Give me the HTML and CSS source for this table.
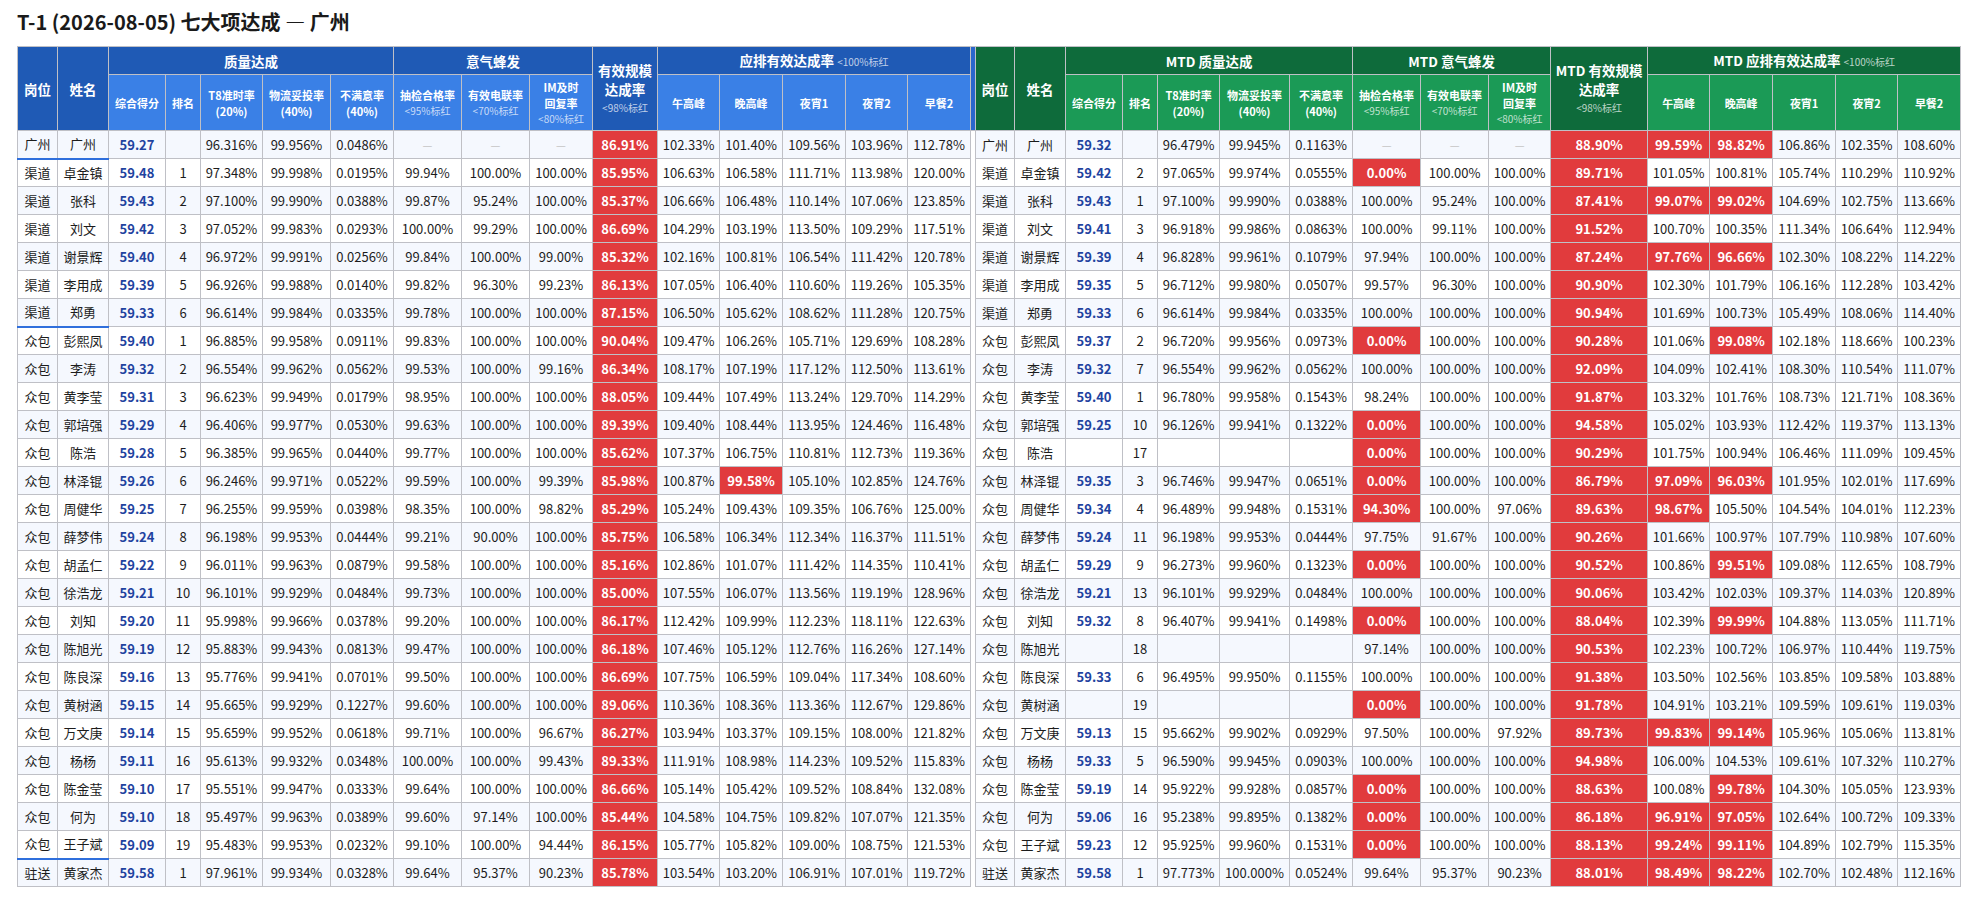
FILE: index.html
```html
<!DOCTYPE html>
<html lang="zh-CN">
<head>
<meta charset="utf-8">
<title>T-1 七大项达成 — 广州</title>
<link rel="stylesheet" href="styles.css">
</head>
<body>
<h1 class="title">T-1 (2026-08-05) 七大项达成 — 广州</h1>
<table class="grid">
<colgroup>
<col class="w40"><col class="w51"><col class="w57"><col class="w35"><col class="w62"><col class="w68"><col class="w63"><col class="w68"><col class="w68"><col class="w63"><col class="w65"><col class="w62"><col class="w63"><col class="w63"><col class="w62"><col class="w63">
<col class="w5">
<col class="w39"><col class="w51"><col class="w57"><col class="w35"><col class="w62"><col class="w70"><col class="w63"><col class="w68"><col class="w68"><col class="w62"><col class="w97"><col class="w62"><col class="w63"><col class="w63"><col class="w62"><col class="w63">
</colgroup>
<thead>
<tr class="h1">
<th rowspan="2" class="b1">岗位</th>
<th rowspan="2" class="b1">姓名</th>
<th colspan="5" class="b1">质量达成</th>
<th colspan="3" class="b1">意气蜂发</th>
<th rowspan="2" class="b1 tall">有效规模<br>达成率<span class="note">&lt;98%标红</span></th>
<th colspan="5" class="b1">应排有效达成率 <span class="inote">&lt;100%标红</span></th>
<th rowspan="2" class="sepH"></th>
<th rowspan="2" class="g1">岗位</th>
<th rowspan="2" class="g1">姓名</th>
<th colspan="5" class="g1">MTD 质量达成</th>
<th colspan="3" class="g1">MTD 意气蜂发</th>
<th rowspan="2" class="g1 tall">MTD 有效规模<br>达成率<span class="note">&lt;98%标红</span></th>
<th colspan="5" class="g1">MTD 应排有效达成率 <span class="inote">&lt;100%标红</span></th>
</tr>
<tr class="h2">
<th class="b2">综合得分</th><th class="b2">排名</th><th class="b2">T8准时率<br>(20%)</th><th class="b2">物流妥投率<br>(40%)</th><th class="b2">不满意率<br>(40%)</th>
<th class="b2">抽检合格率<span class="note">&lt;95%标红</span></th><th class="b2">有效电联率<span class="note">&lt;70%标红</span></th><th class="b2">IM及时<br>回复率<span class="note">&lt;80%标红</span></th>
<th class="b2">午高峰</th><th class="b2">晚高峰</th><th class="b2">夜宵1</th><th class="b2">夜宵2</th><th class="b2">早餐2</th>
<th class="g2">综合得分</th><th class="g2">排名</th><th class="g2">T8准时率<br>(20%)</th><th class="g2">物流妥投率<br>(40%)</th><th class="g2">不满意率<br>(40%)</th>
<th class="g2">抽检合格率<span class="note">&lt;95%标红</span></th><th class="g2">有效电联率<span class="note">&lt;70%标红</span></th><th class="g2">IM及时<br>回复率<span class="note">&lt;80%标红</span></th>
<th class="g2">午高峰</th><th class="g2">晚高峰</th><th class="g2">夜宵1</th><th class="g2">夜宵2</th><th class="g2">早餐2</th>
</tr>
</thead>
<tbody>
<tr class="ge"><td>广州</td><td>广州</td><td class="s">59.27</td><td></td><td>96.316%</td><td>99.956%</td><td>0.0486%</td><td class="d">—</td><td class="d">—</td><td class="d">—</td><td class="r">86.91%</td><td>102.33%</td><td>101.40%</td><td>109.56%</td><td>103.96%</td><td>112.78%</td><td class="sep"></td><td>广州</td><td>广州</td><td class="s">59.32</td><td></td><td>96.479%</td><td>99.945%</td><td>0.1163%</td><td class="d">—</td><td class="d">—</td><td class="d">—</td><td class="r">88.90%</td><td class="r">99.59%</td><td class="r">98.82%</td><td>106.86%</td><td>102.35%</td><td>108.60%</td></tr>
<tr><td>渠道</td><td>卓金镇</td><td class="s">59.48</td><td>1</td><td>97.348%</td><td>99.998%</td><td>0.0195%</td><td>99.94%</td><td>100.00%</td><td>100.00%</td><td class="r">85.95%</td><td>106.63%</td><td>106.58%</td><td>111.71%</td><td>113.98%</td><td>120.00%</td><td class="sep"></td><td>渠道</td><td>卓金镇</td><td class="s">59.42</td><td>2</td><td>97.065%</td><td>99.974%</td><td>0.0555%</td><td class="r">0.00%</td><td>100.00%</td><td>100.00%</td><td class="r">89.71%</td><td>101.05%</td><td>100.81%</td><td>105.74%</td><td>110.29%</td><td>110.92%</td></tr>
<tr><td>渠道</td><td>张科</td><td class="s">59.43</td><td>2</td><td>97.100%</td><td>99.990%</td><td>0.0388%</td><td>99.87%</td><td>95.24%</td><td>100.00%</td><td class="r">85.37%</td><td>106.66%</td><td>106.48%</td><td>110.14%</td><td>107.06%</td><td>123.85%</td><td class="sep"></td><td>渠道</td><td>张科</td><td class="s">59.43</td><td>1</td><td>97.100%</td><td>99.990%</td><td>0.0388%</td><td>100.00%</td><td>95.24%</td><td>100.00%</td><td class="r">87.41%</td><td class="r">99.07%</td><td class="r">99.02%</td><td>104.69%</td><td>102.75%</td><td>113.66%</td></tr>
<tr><td>渠道</td><td>刘文</td><td class="s">59.42</td><td>3</td><td>97.052%</td><td>99.983%</td><td>0.0293%</td><td>100.00%</td><td>99.29%</td><td>100.00%</td><td class="r">86.69%</td><td>104.29%</td><td>103.19%</td><td>113.50%</td><td>109.29%</td><td>117.51%</td><td class="sep"></td><td>渠道</td><td>刘文</td><td class="s">59.41</td><td>3</td><td>96.918%</td><td>99.986%</td><td>0.0863%</td><td>100.00%</td><td>99.11%</td><td>100.00%</td><td class="r">91.52%</td><td>100.70%</td><td>100.35%</td><td>111.34%</td><td>106.64%</td><td>112.94%</td></tr>
<tr><td>渠道</td><td>谢景辉</td><td class="s">59.40</td><td>4</td><td>96.972%</td><td>99.991%</td><td>0.0256%</td><td>99.84%</td><td>100.00%</td><td>99.00%</td><td class="r">85.32%</td><td>102.16%</td><td>100.81%</td><td>106.54%</td><td>111.42%</td><td>120.78%</td><td class="sep"></td><td>渠道</td><td>谢景辉</td><td class="s">59.39</td><td>4</td><td>96.828%</td><td>99.961%</td><td>0.1079%</td><td>97.94%</td><td>100.00%</td><td>100.00%</td><td class="r">87.24%</td><td class="r">97.76%</td><td class="r">96.66%</td><td>102.30%</td><td>108.22%</td><td>114.22%</td></tr>
<tr><td>渠道</td><td>李用成</td><td class="s">59.39</td><td>5</td><td>96.926%</td><td>99.988%</td><td>0.0140%</td><td>99.82%</td><td>96.30%</td><td>99.23%</td><td class="r">86.13%</td><td>107.05%</td><td>106.40%</td><td>110.60%</td><td>119.26%</td><td>105.35%</td><td class="sep"></td><td>渠道</td><td>李用成</td><td class="s">59.35</td><td>5</td><td>96.712%</td><td>99.980%</td><td>0.0507%</td><td>99.57%</td><td>96.30%</td><td>100.00%</td><td class="r">90.90%</td><td>102.30%</td><td>101.79%</td><td>106.16%</td><td>112.28%</td><td>103.42%</td></tr>
<tr class="ge"><td>渠道</td><td>郑勇</td><td class="s">59.33</td><td>6</td><td>96.614%</td><td>99.984%</td><td>0.0335%</td><td>99.78%</td><td>100.00%</td><td>100.00%</td><td class="r">87.15%</td><td>106.50%</td><td>105.62%</td><td>108.62%</td><td>111.28%</td><td>120.75%</td><td class="sep"></td><td>渠道</td><td>郑勇</td><td class="s">59.33</td><td>6</td><td>96.614%</td><td>99.984%</td><td>0.0335%</td><td>100.00%</td><td>100.00%</td><td>100.00%</td><td class="r">90.94%</td><td>101.69%</td><td>100.73%</td><td>105.49%</td><td>108.06%</td><td>114.40%</td></tr>
<tr><td>众包</td><td>彭熙凤</td><td class="s">59.40</td><td>1</td><td>96.885%</td><td>99.958%</td><td>0.0911%</td><td>99.83%</td><td>100.00%</td><td>100.00%</td><td class="r">90.04%</td><td>109.47%</td><td>106.26%</td><td>105.71%</td><td>129.69%</td><td>108.28%</td><td class="sep"></td><td>众包</td><td>彭熙凤</td><td class="s">59.37</td><td>2</td><td>96.720%</td><td>99.956%</td><td>0.0973%</td><td class="r">0.00%</td><td>100.00%</td><td>100.00%</td><td class="r">90.28%</td><td>101.06%</td><td class="r">99.08%</td><td>102.18%</td><td>118.66%</td><td>100.23%</td></tr>
<tr><td>众包</td><td>李涛</td><td class="s">59.32</td><td>2</td><td>96.554%</td><td>99.962%</td><td>0.0562%</td><td>99.53%</td><td>100.00%</td><td>99.16%</td><td class="r">86.34%</td><td>108.17%</td><td>107.19%</td><td>117.12%</td><td>112.50%</td><td>113.61%</td><td class="sep"></td><td>众包</td><td>李涛</td><td class="s">59.32</td><td>7</td><td>96.554%</td><td>99.962%</td><td>0.0562%</td><td>100.00%</td><td>100.00%</td><td>100.00%</td><td class="r">92.09%</td><td>104.09%</td><td>102.41%</td><td>108.30%</td><td>110.54%</td><td>111.07%</td></tr>
<tr><td>众包</td><td>黄李莹</td><td class="s">59.31</td><td>3</td><td>96.623%</td><td>99.949%</td><td>0.0179%</td><td>98.95%</td><td>100.00%</td><td>100.00%</td><td class="r">88.05%</td><td>109.44%</td><td>107.49%</td><td>113.24%</td><td>129.70%</td><td>114.29%</td><td class="sep"></td><td>众包</td><td>黄李莹</td><td class="s">59.40</td><td>1</td><td>96.780%</td><td>99.958%</td><td>0.1543%</td><td>98.24%</td><td>100.00%</td><td>100.00%</td><td class="r">91.87%</td><td>103.32%</td><td>101.76%</td><td>108.73%</td><td>121.71%</td><td>108.36%</td></tr>
<tr><td>众包</td><td>郭培强</td><td class="s">59.29</td><td>4</td><td>96.406%</td><td>99.977%</td><td>0.0530%</td><td>99.63%</td><td>100.00%</td><td>100.00%</td><td class="r">89.39%</td><td>109.40%</td><td>108.44%</td><td>113.95%</td><td>124.46%</td><td>116.48%</td><td class="sep"></td><td>众包</td><td>郭培强</td><td class="s">59.25</td><td>10</td><td>96.126%</td><td>99.941%</td><td>0.1322%</td><td class="r">0.00%</td><td>100.00%</td><td>100.00%</td><td class="r">94.58%</td><td>105.02%</td><td>103.93%</td><td>112.42%</td><td>119.37%</td><td>113.13%</td></tr>
<tr><td>众包</td><td>陈浩</td><td class="s">59.28</td><td>5</td><td>96.385%</td><td>99.965%</td><td>0.0440%</td><td>99.77%</td><td>100.00%</td><td>100.00%</td><td class="r">85.62%</td><td>107.37%</td><td>106.75%</td><td>110.81%</td><td>112.73%</td><td>119.36%</td><td class="sep"></td><td>众包</td><td>陈浩</td><td class="s"></td><td>17</td><td></td><td></td><td></td><td class="r">0.00%</td><td>100.00%</td><td>100.00%</td><td class="r">90.29%</td><td>101.75%</td><td>100.94%</td><td>106.46%</td><td>111.09%</td><td>109.45%</td></tr>
<tr><td>众包</td><td>林泽锟</td><td class="s">59.26</td><td>6</td><td>96.246%</td><td>99.971%</td><td>0.0522%</td><td>99.59%</td><td>100.00%</td><td>99.39%</td><td class="r">85.98%</td><td>100.87%</td><td class="r">99.58%</td><td>105.10%</td><td>102.85%</td><td>124.76%</td><td class="sep"></td><td>众包</td><td>林泽锟</td><td class="s">59.35</td><td>3</td><td>96.746%</td><td>99.947%</td><td>0.0651%</td><td class="r">0.00%</td><td>100.00%</td><td>100.00%</td><td class="r">86.79%</td><td class="r">97.09%</td><td class="r">96.03%</td><td>101.95%</td><td>102.01%</td><td>117.69%</td></tr>
<tr><td>众包</td><td>周健华</td><td class="s">59.25</td><td>7</td><td>96.255%</td><td>99.959%</td><td>0.0398%</td><td>98.35%</td><td>100.00%</td><td>98.82%</td><td class="r">85.29%</td><td>105.24%</td><td>109.43%</td><td>109.35%</td><td>106.76%</td><td>125.00%</td><td class="sep"></td><td>众包</td><td>周健华</td><td class="s">59.34</td><td>4</td><td>96.489%</td><td>99.948%</td><td>0.1531%</td><td class="r">94.30%</td><td>100.00%</td><td>97.06%</td><td class="r">89.63%</td><td class="r">98.67%</td><td>105.50%</td><td>104.54%</td><td>104.01%</td><td>112.23%</td></tr>
<tr><td>众包</td><td>薛梦伟</td><td class="s">59.24</td><td>8</td><td>96.198%</td><td>99.953%</td><td>0.0444%</td><td>99.21%</td><td>90.00%</td><td>100.00%</td><td class="r">85.75%</td><td>106.58%</td><td>106.34%</td><td>112.34%</td><td>116.37%</td><td>111.51%</td><td class="sep"></td><td>众包</td><td>薛梦伟</td><td class="s">59.24</td><td>11</td><td>96.198%</td><td>99.953%</td><td>0.0444%</td><td>97.75%</td><td>91.67%</td><td>100.00%</td><td class="r">90.26%</td><td>101.66%</td><td>100.97%</td><td>107.79%</td><td>110.98%</td><td>107.60%</td></tr>
<tr><td>众包</td><td>胡孟仁</td><td class="s">59.22</td><td>9</td><td>96.011%</td><td>99.963%</td><td>0.0879%</td><td>99.58%</td><td>100.00%</td><td>100.00%</td><td class="r">85.16%</td><td>102.86%</td><td>101.07%</td><td>111.42%</td><td>114.35%</td><td>110.41%</td><td class="sep"></td><td>众包</td><td>胡孟仁</td><td class="s">59.29</td><td>9</td><td>96.273%</td><td>99.960%</td><td>0.1323%</td><td class="r">0.00%</td><td>100.00%</td><td>100.00%</td><td class="r">90.52%</td><td>100.86%</td><td class="r">99.51%</td><td>109.08%</td><td>112.65%</td><td>108.79%</td></tr>
<tr><td>众包</td><td>徐浩龙</td><td class="s">59.21</td><td>10</td><td>96.101%</td><td>99.929%</td><td>0.0484%</td><td>99.73%</td><td>100.00%</td><td>100.00%</td><td class="r">85.00%</td><td>107.55%</td><td>106.07%</td><td>113.56%</td><td>119.19%</td><td>128.96%</td><td class="sep"></td><td>众包</td><td>徐浩龙</td><td class="s">59.21</td><td>13</td><td>96.101%</td><td>99.929%</td><td>0.0484%</td><td>100.00%</td><td>100.00%</td><td>100.00%</td><td class="r">90.06%</td><td>103.42%</td><td>102.03%</td><td>109.37%</td><td>114.03%</td><td>120.89%</td></tr>
<tr><td>众包</td><td>刘知</td><td class="s">59.20</td><td>11</td><td>95.998%</td><td>99.966%</td><td>0.0378%</td><td>99.20%</td><td>100.00%</td><td>100.00%</td><td class="r">86.17%</td><td>112.42%</td><td>109.99%</td><td>112.23%</td><td>118.11%</td><td>122.63%</td><td class="sep"></td><td>众包</td><td>刘知</td><td class="s">59.32</td><td>8</td><td>96.407%</td><td>99.941%</td><td>0.1498%</td><td class="r">0.00%</td><td>100.00%</td><td>100.00%</td><td class="r">88.04%</td><td>102.39%</td><td class="r">99.99%</td><td>104.88%</td><td>113.05%</td><td>111.71%</td></tr>
<tr><td>众包</td><td>陈旭光</td><td class="s">59.19</td><td>12</td><td>95.883%</td><td>99.943%</td><td>0.0813%</td><td>99.47%</td><td>100.00%</td><td>100.00%</td><td class="r">86.18%</td><td>107.46%</td><td>105.12%</td><td>112.76%</td><td>116.26%</td><td>127.14%</td><td class="sep"></td><td>众包</td><td>陈旭光</td><td class="s"></td><td>18</td><td></td><td></td><td></td><td>97.14%</td><td>100.00%</td><td>100.00%</td><td class="r">90.53%</td><td>102.23%</td><td>100.72%</td><td>106.97%</td><td>110.44%</td><td>119.75%</td></tr>
<tr><td>众包</td><td>陈良深</td><td class="s">59.16</td><td>13</td><td>95.776%</td><td>99.941%</td><td>0.0701%</td><td>99.50%</td><td>100.00%</td><td>100.00%</td><td class="r">86.69%</td><td>107.75%</td><td>106.59%</td><td>109.04%</td><td>117.34%</td><td>108.60%</td><td class="sep"></td><td>众包</td><td>陈良深</td><td class="s">59.33</td><td>6</td><td>96.495%</td><td>99.950%</td><td>0.1155%</td><td>100.00%</td><td>100.00%</td><td>100.00%</td><td class="r">91.38%</td><td>103.50%</td><td>102.56%</td><td>103.85%</td><td>109.58%</td><td>103.88%</td></tr>
<tr><td>众包</td><td>黄树涵</td><td class="s">59.15</td><td>14</td><td>95.665%</td><td>99.929%</td><td>0.1227%</td><td>99.60%</td><td>100.00%</td><td>100.00%</td><td class="r">89.06%</td><td>110.36%</td><td>108.36%</td><td>113.36%</td><td>112.67%</td><td>129.86%</td><td class="sep"></td><td>众包</td><td>黄树涵</td><td class="s"></td><td>19</td><td></td><td></td><td></td><td class="r">0.00%</td><td>100.00%</td><td>100.00%</td><td class="r">91.78%</td><td>104.91%</td><td>103.21%</td><td>109.59%</td><td>109.61%</td><td>119.03%</td></tr>
<tr><td>众包</td><td>万文庚</td><td class="s">59.14</td><td>15</td><td>95.659%</td><td>99.952%</td><td>0.0618%</td><td>99.71%</td><td>100.00%</td><td>96.67%</td><td class="r">86.27%</td><td>103.94%</td><td>103.37%</td><td>109.15%</td><td>108.00%</td><td>121.82%</td><td class="sep"></td><td>众包</td><td>万文庚</td><td class="s">59.13</td><td>15</td><td>95.662%</td><td>99.902%</td><td>0.0929%</td><td>97.50%</td><td>100.00%</td><td>97.92%</td><td class="r">89.73%</td><td class="r">99.83%</td><td class="r">99.14%</td><td>105.96%</td><td>105.06%</td><td>113.81%</td></tr>
<tr><td>众包</td><td>杨杨</td><td class="s">59.11</td><td>16</td><td>95.613%</td><td>99.932%</td><td>0.0348%</td><td>100.00%</td><td>100.00%</td><td>99.43%</td><td class="r">89.33%</td><td>111.91%</td><td>108.98%</td><td>114.23%</td><td>109.52%</td><td>115.83%</td><td class="sep"></td><td>众包</td><td>杨杨</td><td class="s">59.33</td><td>5</td><td>96.590%</td><td>99.945%</td><td>0.0903%</td><td>100.00%</td><td>100.00%</td><td>100.00%</td><td class="r">94.98%</td><td>106.00%</td><td>104.53%</td><td>109.61%</td><td>107.32%</td><td>110.27%</td></tr>
<tr><td>众包</td><td>陈金莹</td><td class="s">59.10</td><td>17</td><td>95.551%</td><td>99.947%</td><td>0.0333%</td><td>99.64%</td><td>100.00%</td><td>100.00%</td><td class="r">86.66%</td><td>105.14%</td><td>105.42%</td><td>109.52%</td><td>108.84%</td><td>132.08%</td><td class="sep"></td><td>众包</td><td>陈金莹</td><td class="s">59.19</td><td>14</td><td>95.922%</td><td>99.928%</td><td>0.0857%</td><td class="r">0.00%</td><td>100.00%</td><td>100.00%</td><td class="r">88.63%</td><td>100.08%</td><td class="r">99.78%</td><td>104.30%</td><td>105.05%</td><td>123.93%</td></tr>
<tr><td>众包</td><td>何为</td><td class="s">59.10</td><td>18</td><td>95.497%</td><td>99.963%</td><td>0.0389%</td><td>99.60%</td><td>97.14%</td><td>100.00%</td><td class="r">85.44%</td><td>104.58%</td><td>104.75%</td><td>109.82%</td><td>107.07%</td><td>121.35%</td><td class="sep"></td><td>众包</td><td>何为</td><td class="s">59.06</td><td>16</td><td>95.238%</td><td>99.895%</td><td>0.1382%</td><td class="r">0.00%</td><td>100.00%</td><td>100.00%</td><td class="r">86.18%</td><td class="r">96.91%</td><td class="r">97.05%</td><td>102.64%</td><td>100.72%</td><td>109.33%</td></tr>
<tr class="ge"><td>众包</td><td>王子斌</td><td class="s">59.09</td><td>19</td><td>95.483%</td><td>99.953%</td><td>0.0232%</td><td>99.10%</td><td>100.00%</td><td>94.44%</td><td class="r">86.15%</td><td>105.77%</td><td>105.82%</td><td>109.00%</td><td>108.75%</td><td>121.53%</td><td class="sep"></td><td>众包</td><td>王子斌</td><td class="s">59.23</td><td>12</td><td>95.925%</td><td>99.960%</td><td>0.1531%</td><td class="r">0.00%</td><td>100.00%</td><td>100.00%</td><td class="r">88.13%</td><td class="r">99.24%</td><td class="r">99.11%</td><td>104.89%</td><td>102.79%</td><td>115.35%</td></tr>
<tr class="last"><td>驻送</td><td>黄家杰</td><td class="s">59.58</td><td>1</td><td>97.961%</td><td>99.934%</td><td>0.0328%</td><td>99.64%</td><td>95.37%</td><td>90.23%</td><td class="r">85.78%</td><td>103.54%</td><td>103.20%</td><td>106.91%</td><td>107.01%</td><td>119.72%</td><td class="sep"></td><td>驻送</td><td>黄家杰</td><td class="s">59.58</td><td>1</td><td>97.773%</td><td>100.000%</td><td>0.0524%</td><td>99.64%</td><td>95.37%</td><td>90.23%</td><td class="r">88.01%</td><td class="r">98.49%</td><td class="r">98.22%</td><td>102.70%</td><td>102.48%</td><td>112.16%</td></tr>
</tbody>
</table>
</body>
</html>
```

FILE: styles.css
```css
* { box-sizing: border-box; }
html, body { background: #ffffff; }
body {
  margin: 0;
  padding: 8px 17px 0;
  font-family: "Noto Sans CJK SC", "Noto Sans", sans-serif;
  color: #1c1c1c;
}
.title {
  margin: 0 0 10px;
  font-size: 20px;
  line-height: 28px;
  font-weight: 700;
  color: #1a1a1a;
}
.grid {
  border-collapse: collapse;
  table-layout: fixed;
  width: 1943px;
  font-size: 13px;
}
.w5 { width: 5px; }
.w35 { width: 35px; }
.w39 { width: 39px; }
.w40 { width: 40px; }
.w51 { width: 51px; }
.w57 { width: 57px; }
.w62 { width: 62px; }
.w63 { width: 63px; }
.w65 { width: 65px; }
.w68 { width: 68px; }
.w70 { width: 70px; }
.w97 { width: 97px; }

.grid th, .grid td {
  border: 1px solid #bfc0c6;
  text-align: center;
  padding: 0 2px;
  white-space: nowrap;
}
.grid th {
  color: #ffffff;
  font-weight: 700;
}
.h1 th {
  height: 28px;
  font-size: 13.5px;
  line-height: 18px;
}
.h2 th {
  height: 56px;
  font-size: 11px;
  line-height: 16px;
}
.h1 th.tall { line-height: 19px; }
.b1 { background: #1f5ab5; }
.b2 { background: #3a80e6; }
.g1 { background: #0e6b3b; }
.g2 { background: #1b9a56; }
.sepH { background: #2a66cc; padding: 0; }
.note {
  display: block;
  font-size: 10px;
  line-height: 16px;
  font-weight: 400;
  color: rgba(255, 255, 255, 0.72);
}
.h1 .note { margin-top: 1px; }
.inote {
  font-size: 10px;
  font-weight: 400;
  color: rgba(255, 255, 255, 0.72);
}

.grid td {
  height: 28px;
  line-height: 18px;
  background: #ffffff;
}
.grid tbody tr:nth-child(odd) td { background: #f5f8fe; }
.grid tbody tr:nth-child(odd) td.r,
.grid td.r {
  background: #e13b3d;
  color: #ffffff;
  font-weight: 700;
}
.grid td.s {
  color: #1f43a0;
  font-weight: 700;
}
.grid td.d {
  color: #c6c6c6;
  font-size: 11px;
}
.grid td.sep,
.grid tbody tr:nth-child(odd) td.sep {
  background: #ffffff;
  padding: 0;
  border-top: none;
  border-bottom: none;
}
.grid tr.last td.sep { border-bottom: 1px solid #bfc0c6; }
.grid tr.ge td:nth-child(1),
.grid tr.ge td:nth-child(2) {
  border-bottom: 2px solid #2f6fdc;
}
```
